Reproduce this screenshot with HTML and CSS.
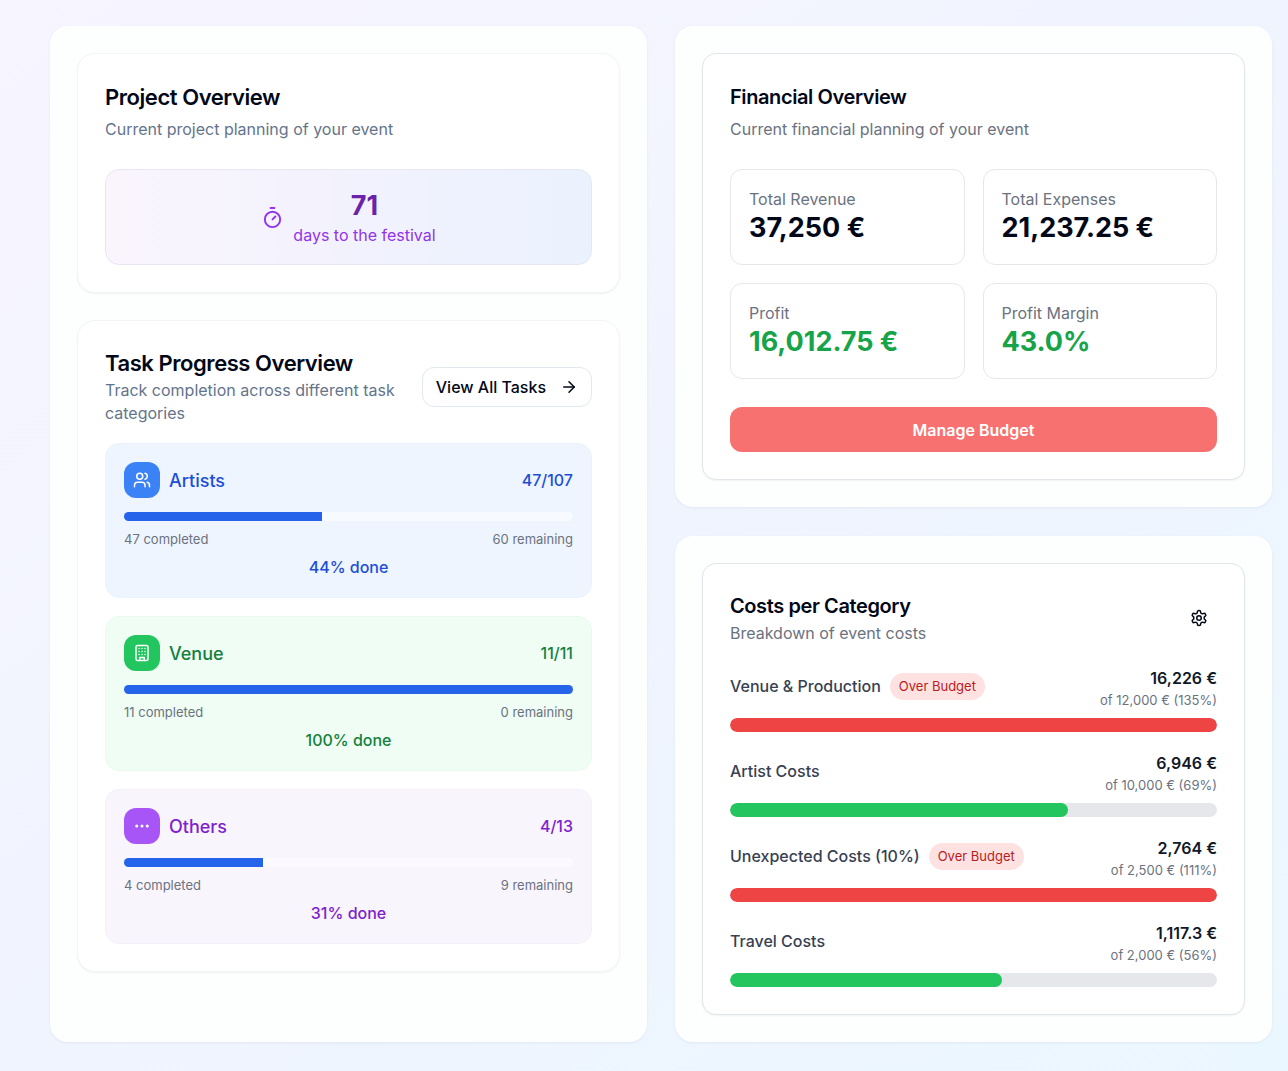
FILE: index.html
```html
<!DOCTYPE html>
<html lang="en">
<head>
    <meta charset="UTF-8">
    <meta name="viewport" content="width=device-width, initial-scale=1">
    <title>Event Dashboard</title>
    <link rel="stylesheet" href="styles.css">
</head>
<body>
<main class="dashboard">
    <!-- Planning column -->
    <section class="panel panel-tall">
        <div class="card card-soft">
            <h2 class="card-title">Project Overview</h2>
            <p class="card-subtitle">Current project planning of your event</p>
            <div class="countdown">
                <svg class="countdown-icon" viewBox="0 0 24 24" aria-hidden="true">
                    <path d="M10 2h4"/>
                    <path d="M12 14l3-3"/>
                    <circle cx="12" cy="14" r="8"/>
                </svg>
                <div class="countdown-text">
                    <div class="countdown-number">71</div>
                    <div class="countdown-label">days to the festival</div>
                </div>
            </div>
        </div>

        <div class="card card-soft">
            <div class="card-header">
                <div>
                    <h2 class="card-title">Task Progress Overview</h2>
                    <p class="card-subtitle">Track completion across different task categories</p>
                </div>
                <button type="button" class="btn-outline">
                    View All Tasks
                    <svg class="icon" viewBox="0 0 24 24" aria-hidden="true">
                        <path d="M5 12h14"/>
                        <path d="M12 5l7 7-7 7"/>
                    </svg>
                </button>
            </div>
            <div class="tasks">
                <div class="task task-artists">
                    <div class="task-head">
                        <span class="task-icon">
                            <svg class="icon" viewBox="0 0 24 24" aria-hidden="true">
                                <path d="M16 21v-2a4 4 0 0 0-4-4H6a4 4 0 0 0-4 4v2"/>
                                <circle cx="9" cy="7" r="4"/>
                                <path d="M22 21v-2a4 4 0 0 0-3-3.87"/>
                                <path d="M16 3.13a4 4 0 0 1 0 7.75"/>
                            </svg>
                        </span>
                        <h3 class="task-name">Artists</h3>
                        <span class="task-count">47/107</span>
                    </div>
                    <div class="task-bar"><div class="task-fill" style="width: 44%"></div></div>
                    <div class="task-stats"><span>47 completed</span><span>60 remaining</span></div>
                    <div class="task-done">44% done</div>
                </div>

                <div class="task task-venue">
                    <div class="task-head">
                        <span class="task-icon">
                            <svg class="icon" viewBox="0 0 24 24" aria-hidden="true">
                                <rect x="4" y="2" width="16" height="20" rx="2"/>
                                <path d="M9 22v-4h6v4"/>
                                <path d="M8 6h.01M12 6h.01M16 6h.01M8 10h.01M12 10h.01M16 10h.01M8 14h.01M12 14h.01M16 14h.01"/>
                            </svg>
                        </span>
                        <h3 class="task-name">Venue</h3>
                        <span class="task-count">11/11</span>
                    </div>
                    <div class="task-bar"><div class="task-fill" style="width: 100%"></div></div>
                    <div class="task-stats"><span>11 completed</span><span>0 remaining</span></div>
                    <div class="task-done">100% done</div>
                </div>

                <div class="task task-others">
                    <div class="task-head">
                        <span class="task-icon">
                            <svg class="icon" viewBox="0 0 24 24" aria-hidden="true">
                                <circle cx="5" cy="12" r="1"/>
                                <circle cx="12" cy="12" r="1"/>
                                <circle cx="19" cy="12" r="1"/>
                            </svg>
                        </span>
                        <h3 class="task-name">Others</h3>
                        <span class="task-count">4/13</span>
                    </div>
                    <div class="task-bar"><div class="task-fill" style="width: 31%"></div></div>
                    <div class="task-stats"><span>4 completed</span><span>9 remaining</span></div>
                    <div class="task-done">31% done</div>
                </div>
            </div>
        </div>
    </section>

    <!-- Finances -->
    <section class="panel">
        <div class="card">
            <h2 class="card-title title-small">Financial Overview</h2>
            <p class="card-subtitle subtitle-gray">Current financial planning of your event</p>
            <div class="figures">
                <div class="figure">
                    <div class="figure-label">Total Revenue</div>
                    <div class="figure-value">37,250 €</div>
                </div>
                <div class="figure">
                    <div class="figure-label">Total Expenses</div>
                    <div class="figure-value">21,237.25 €</div>
                </div>
                <div class="figure">
                    <div class="figure-label">Profit</div>
                    <div class="figure-value positive">16,012.75 €</div>
                </div>
                <div class="figure">
                    <div class="figure-label">Profit Margin</div>
                    <div class="figure-value positive">43.0%</div>
                </div>
            </div>
            <button type="button" class="btn-primary">Manage Budget</button>
        </div>
    </section>

    <!-- Costs -->
    <section class="panel">
        <div class="card">
            <div class="card-header">
                <div>
                    <h2 class="card-title title-small">Costs per Category</h2>
                    <p class="card-subtitle subtitle-gray">Breakdown of event costs</p>
                </div>
                <button type="button" class="btn-icon" aria-label="Settings">
                    <svg class="icon" viewBox="0 0 24 24" aria-hidden="true">
                        <path d="M12.22 2h-.44a2 2 0 0 0-2 2v.18a2 2 0 0 1-1 1.73l-.43.25a2 2 0 0 1-2 0l-.15-.08a2 2 0 0 0-2.73.73l-.22.38a2 2 0 0 0 .73 2.73l.15.1a2 2 0 0 1 1 1.72v.51a2 2 0 0 1-1 1.74l-.15.09a2 2 0 0 0-.73 2.73l.22.38a2 2 0 0 0 2.73.73l.15-.08a2 2 0 0 1 2 0l.43.25a2 2 0 0 1 1 1.73V20a2 2 0 0 0 2 2h.44a2 2 0 0 0 2-2v-.18a2 2 0 0 1 1-1.73l.43-.25a2 2 0 0 1 2 0l.15.08a2 2 0 0 0 2.73-.73l.22-.39a2 2 0 0 0-.73-2.73l-.15-.08a2 2 0 0 1-1-1.74v-.5a2 2 0 0 1 1-1.74l.15-.09a2 2 0 0 0 .73-2.73l-.22-.38a2 2 0 0 0-2.73-.73l-.15.08a2 2 0 0 1-2 0l-.43-.25a2 2 0 0 1-1-1.73V4a2 2 0 0 0-2-2z"/>
                        <circle cx="12" cy="12" r="3"/>
                    </svg>
                </button>
            </div>
            <div class="costs">
                <div class="cost over">
                    <div class="cost-head">
                        <div class="cost-name">Venue &amp; Production <span class="badge">Over Budget</span></div>
                        <div class="cost-amount">
                            <div class="cost-value">16,226 €</div>
                            <div class="cost-limit">of 12,000 € (135%)</div>
                        </div>
                    </div>
                    <div class="cost-bar"><div class="cost-fill" style="width: 100%"></div></div>
                </div>
                <div class="cost">
                    <div class="cost-head">
                        <div class="cost-name">Artist Costs</div>
                        <div class="cost-amount">
                            <div class="cost-value">6,946 €</div>
                            <div class="cost-limit">of 10,000 € (69%)</div>
                        </div>
                    </div>
                    <div class="cost-bar"><div class="cost-fill" style="width: 69.46%"></div></div>
                </div>
                <div class="cost over">
                    <div class="cost-head">
                        <div class="cost-name">Unexpected Costs (10%) <span class="badge">Over Budget</span></div>
                        <div class="cost-amount">
                            <div class="cost-value">2,764 €</div>
                            <div class="cost-limit">of 2,500 € (111%)</div>
                        </div>
                    </div>
                    <div class="cost-bar"><div class="cost-fill" style="width: 100%"></div></div>
                </div>
                <div class="cost">
                    <div class="cost-head">
                        <div class="cost-name">Travel Costs</div>
                        <div class="cost-amount">
                            <div class="cost-value">1,117.3 €</div>
                            <div class="cost-limit">of 2,000 € (56%)</div>
                        </div>
                    </div>
                    <div class="cost-bar"><div class="cost-fill" style="width: 55.87%"></div></div>
                </div>
            </div>
        </div>
    </section>
</main>
</body>
</html>
```
FILE: styles.css
```css
* {
    box-sizing: border-box;
}
body {
    margin: 0;
    min-height: 100vh;
    font-family: Inter, sans-serif;
    font-size: 16px;
    line-height: 23px;
    color: #020817;
    background: linear-gradient(to bottom right, #f7f5ff, #f0f4fe 50%, #ebf7ff);
}
h2, h3, p {
    margin: 0;
}
button {
    font-family: inherit;
    font-size: 16px;
    cursor: pointer;
}
.icon {
    width: 18px;
    height: 18px;
    flex-shrink: 0;
    fill: none;
    stroke: currentColor;
    stroke-width: 2;
    stroke-linecap: round;
    stroke-linejoin: round;
}

/* Page grid */
.dashboard {
    display: grid;
    grid-template-columns: 1fr 1fr;
    grid-template-rows: auto 1fr;
    gap: 29px 28px;
    padding: 26px 16px 28px 50px;
}
.panel {
    display: flex;
    flex-direction: column;
    gap: 27px;
    padding: 27px;
    border-radius: 18px;
    background: #fdfffe;
    box-shadow: 0 1px 3px rgba(15, 23, 42, 0.06);
}
.panel-tall {
    grid-row: span 2;
}
.card {
    padding: 27px;
    border: 1px solid #e2e5e9;
    border-radius: 14px;
    background: #fff;
    box-shadow: 0 1px 2px rgba(15, 23, 42, 0.05);
}
.card-soft {
    border-color: #f3f4f6;
    border-radius: 18px;
}
.card-title {
    margin-bottom: 4px;
    font-size: 22px;
    font-weight: 600;
    line-height: 32px;
    letter-spacing: -0.02em;
}
.title-small {
    font-size: 20px;
}
.card-subtitle {
    margin-bottom: 28px;
    line-height: 24px;
    color: #64748b;
}
.subtitle-gray {
    color: #6b7280;
}
.card-header {
    display: flex;
    justify-content: space-between;
    align-items: center;
    gap: 18px;
}
.card-header .card-title {
    margin-bottom: 0;
    line-height: 31px;
}
.card-header .card-subtitle {
    margin-bottom: 0;
    line-height: 23px;
}

/* Buttons */
.btn-outline {
    display: flex;
    align-items: center;
    gap: 14px;
    height: 40px;
    padding: 0 13px;
    border: 1px solid #e2e8f0;
    border-radius: 12px;
    background: #fff;
    color: #020817;
    font-weight: 500;
    white-space: nowrap;
}
.btn-icon {
    display: flex;
    align-items: center;
    justify-content: center;
    width: 36px;
    height: 36px;
    padding: 0;
    border: none;
    border-radius: 9px;
    background: none;
    color: #020817;
}
.btn-primary {
    width: 100%;
    height: 45px;
    border: none;
    border-radius: 12px;
    background: #f87171;
    color: #fff;
    font-weight: 600;
}

/* Countdown */
.countdown {
    display: flex;
    align-items: center;
    justify-content: center;
    gap: 9px;
    padding: 18px;
    border: 1px solid #e9e5f5;
    border-radius: 14px;
    background: linear-gradient(to right, #faf5fd, #f2f2fd 50%, #eaf2fe);
    text-align: center;
}
.countdown-icon {
    width: 23px;
    height: 23px;
    fill: none;
    stroke: #9333ea;
    stroke-width: 2;
    stroke-linecap: round;
}
.countdown-number {
    font-size: 27px;
    font-weight: 700;
    line-height: 36px;
    color: #6b21a8;
}
.countdown-label {
    line-height: 22px;
    color: #9333ea;
}

/* Task tiles */
.tasks {
    display: grid;
    gap: 18px;
    margin-top: 18px;
}
.task {
    padding: 18px;
    border: 1px solid;
    border-radius: 14px;
}
.task-head {
    display: flex;
    align-items: center;
    gap: 9px;
}
.task-icon {
    display: flex;
    align-items: center;
    justify-content: center;
    width: 36px;
    height: 36px;
    border-radius: 12px;
    color: #fff;
}
.task-name {
    flex: 1;
    font-size: 18px;
    font-weight: 500;
}
.task-count {
    font-weight: 500;
}
.task-bar {
    height: 9px;
    margin-top: 14px;
    border-radius: 9px;
    background: rgba(255, 255, 255, 0.5);
    overflow: hidden;
}
.task-fill {
    height: 100%;
    background: #2563eb;
}
.task-stats {
    display: flex;
    justify-content: space-between;
    margin-top: 9px;
    font-size: 13px;
    line-height: 18px;
    color: #6b7280;
}
.task-done {
    margin-top: 8px;
    font-weight: 500;
    text-align: center;
}
.task-artists {
    border-color: #eaf3fd;
    background: #eef5fe;
    color: #1d4ed8;
}
.task-artists .task-icon {
    background: #3b82f6;
}
.task-venue {
    border-color: #e9fbf0;
    background: #effdf4;
    color: #15803d;
}
.task-venue .task-icon {
    background: #22c55e;
}
.task-others {
    border-color: #f5f1fb;
    background: #f9f5fd;
    color: #7e22ce;
}
.task-others .task-icon {
    background: #a855f7;
}

/* Financial figures */
.figures {
    display: grid;
    grid-template-columns: 1fr 1fr;
    gap: 18px;
    margin-bottom: 28px;
}
.figure {
    padding: 18px;
    border: 1px solid #e5e7eb;
    border-radius: 12px;
}
.figure-label {
    line-height: 22px;
    color: #6b7280;
}
.figure-value {
    font-size: 27px;
    font-weight: 700;
    line-height: 36px;
}
.positive {
    color: #16a34a;
}

/* Cost rows */
.costs {
    display: grid;
    gap: 20px;
    margin-top: 22px;
}
.cost-head {
    display: flex;
    justify-content: space-between;
    align-items: center;
    margin-bottom: 8px;
}
.cost-name {
    display: flex;
    align-items: center;
    gap: 9px;
    padding-bottom: 5px;
    font-weight: 500;
    color: #374151;
}
.badge {
    padding: 2px 9px;
    border-radius: 14px;
    background: #fee2e2;
    color: #b91c1c;
    font-size: 13px;
    font-weight: 400;
}
.cost-amount {
    text-align: right;
}
.cost-value {
    font-weight: 600;
    color: #111827;
}
.cost-limit {
    font-size: 13px;
    line-height: 20px;
    color: #6b7280;
}
.cost-bar {
    height: 14px;
    border-radius: 14px;
    background: #e5e7eb;
    overflow: hidden;
}
.cost-fill {
    height: 100%;
    border-radius: 14px;
    background: #22c55e;
}
.over .cost-fill {
    background: #ef4444;
}
```
